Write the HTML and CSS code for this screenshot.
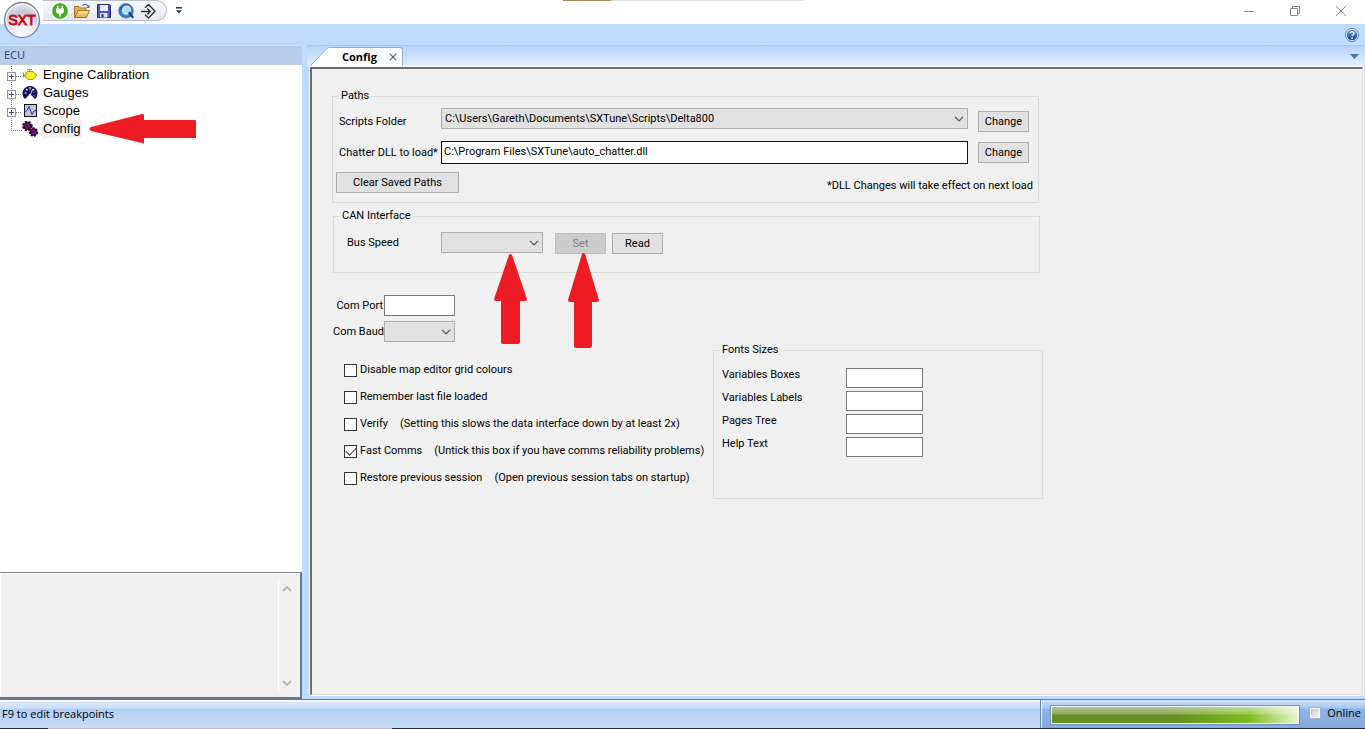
FILE: index.html
```html
<!DOCTYPE html>
<html lang="en">
<head>
<meta charset="utf-8">
<title>SXTune - Config</title>
<link rel="stylesheet" href="styles.css">
</head>
<body>
<svg class="defs" width="0" height="0" aria-hidden="true">
  <defs>
    <radialGradient id="orb" cx=".5" cy=".85" r=".9"><stop offset="0" stop-color="#fff"/><stop offset=".45" stop-color="#dfe3ea"/><stop offset=".65" stop-color="#c3c9d4"/><stop offset="1" stop-color="#f4f6f9"/></radialGradient>
    <linearGradient id="folder" x2="0" y2="1"><stop offset="0" stop-color="#fbe8a6"/><stop offset="1" stop-color="#e8a93a"/></linearGradient>
    <radialGradient id="globe"><stop offset="0" stop-color="#d9f1ff"/><stop offset=".5" stop-color="#5da4e0"/><stop offset="1" stop-color="#1d57ad"/></radialGradient>
    <linearGradient id="help" x2="0" y2="1"><stop offset="0" stop-color="#5f93e6"/><stop offset="1" stop-color="#123f9e"/></linearGradient>
    <symbol id="chevron" viewBox="0 0 10 6"><path d="M1 .8 5 4.8 9 .8" fill="none" stroke="#505050" stroke-width="1.2"/></symbol>
    <symbol id="branch" viewBox="0 0 22 18">
      <path d="M11.500 0V18M16 10.500H22" stroke="#808080" stroke-dasharray="1 1"/>
      <rect x="7.500" y="6.500" width="8" height="8" fill="#fff" stroke="#969696"/>
      <path d="M9 10.500H14M11.500 8V13" stroke="#33508f"/>
    </symbol>
  </defs>
</svg>

<header class="titlebar">
  <button class="orb" aria-label="Application menu">
    <svg viewBox="0 0 38 38" width="38" height="38"><circle cx="19" cy="19" r="17.500" fill="url(#orb)" stroke="#7f8794" stroke-width="1.300"/><circle cx="19" cy="19" r="16" fill="none" stroke="#fff" stroke-opacity=".8"/></svg>
    <span class="orb-text">SXT</span>
  </button>
  <nav class="quick" aria-label="Quick access">
    <button aria-label="Connect"><svg viewBox="0 0 16 16"><circle cx="8" cy="8" r="7.800" fill="#43ad1d"/><path d="M5.700 2.800V6M10.300 2.800V6" stroke="#fff" stroke-width="1.500"/><path d="M4 5.500H12V7.500A4 4 0 0 1 9 11.200V13.500H7V11.200A4 4 0 0 1 4 7.500Z" fill="#fff"/></svg></button>
    <button aria-label="Open"><svg viewBox="0 0 16 16"><path d="M.5 14.500V3.500H5L6.500 5H12V14.500Z" fill="#e6b04c" stroke="#a5741d"/><path d="M.8 14.500 4 7.500H15.600L12.300 14.500Z" fill="url(#folder)" stroke="#a5741d"/><path d="M8.500 3C9.800.8 12.500.8 13.800 2.800" fill="none" stroke="#4c6ea0" stroke-width="1.200"/><path d="M15.500 1.500V5H12Z" fill="#4c6ea0"/></svg></button>
    <button aria-label="Save"><svg viewBox="0 0 16 16"><path d="M1.500 1.500H13.500L14.500 2.500V14.500H1.500Z" fill="#4f55b5" stroke="#28286f"/><rect x="4" y="2" width="8" height="6" fill="#e8edfb"/><rect x="4" y="10" width="7.500" height="4.500" fill="#dfe3f2"/><rect x="5.500" y="11" width="2" height="3.500" fill="#28286f"/></svg></button>
    <button aria-label="Search online"><svg viewBox="0 0 16 16"><circle cx="8" cy="7.800" r="7.300" fill="url(#globe)" stroke="#678fc0"/><path d="M1.500 6C3 2 6 1 8.500 1.200 6 3 5 5 3 8Z" fill="#2761b5"/><circle cx="8.500" cy="7" r="4" fill="#b4dcf8" fill-opacity=".85" stroke="#eef7ff" stroke-width="1"/><path d="M11.500 10 14.500 14" stroke="#1b468e" stroke-width="2.400" stroke-linecap="round"/></svg></button>
    <button aria-label="Go online"><svg viewBox="0 0 16 16"><path d="M1 8.500H10M7.300 5.500 10.300 8.500 7.300 11.500M5.500 5V4.500L8.500 1.500 15 8.300 8.500 15 5.500 12.200V11.500" fill="none" stroke="#333" stroke-width="1.400"/></svg></button>
  </nav>
  <button class="more" aria-label="Customise toolbar"><svg viewBox="0 0 6 7" width="6" height="7"><path d="M0 .8H6" stroke="#1f3c6b" stroke-width="1.500"/><path d="M0 3.200H6L3 6.500Z" fill="#1f3c6b"/></svg></button>
  <div class="window-buttons">
    <button aria-label="Minimise"><svg viewBox="0 0 12 12"><path d="M1 6.500H11" stroke="#888"/></svg></button>
    <button aria-label="Restore"><svg viewBox="0 0 12 12"><path d="M1.500 3.500H8.500V10.500H1.500ZM3.500 3V1.500H10.500V8.500H9" fill="none" stroke="#888"/></svg></button>
    <button aria-label="Close"><svg viewBox="0 0 12 12"><path d="M1 1 11 11M11 1 1 11" stroke="#888"/></svg></button>
  </div>
</header>

<div class="ribbon">
  <button aria-label="Help"><svg viewBox="0 0 14 14" width="14" height="14"><circle cx="7" cy="7" r="6.500" fill="#fff" stroke="#5278b8"/><circle cx="7" cy="7" r="5.200" fill="url(#help)"/><path d="M5.100 5.500C5.100 3.200 9 3.200 9 5.400 9 6.900 7.100 6.700 7.100 8.300" fill="none" stroke="#fff" stroke-width="1.400"/><circle cx="7.100" cy="10.200" r=".9" fill="#fff"/></svg></button>
</div>

<div class="workspace">
  <aside class="sidebar">
    <h2 class="side-title">ECU</h2>
    <ul class="tree">
      <li>
        <svg class="branch"><use href="#branch"/></svg>
        <svg class="node-icon" viewBox="0 0 16 16"><path d="M2 8H4V5.500L6 4.500H11L13 7 15 8 13 10.500 11 12.500H6L4 10.500V9H2ZM7.500 4.500V2.500M5 2.500H10" fill="#f8f01c" stroke="#a39e00"/><path d="M1.500 5.500V10.500" stroke="#a39e00"/></svg>
        <span>Engine Calibration</span>
      </li>
      <li>
        <svg class="branch"><use href="#branch"/></svg>
        <svg class="node-icon" viewBox="0 0 16 16"><path d="M3 14A7.500 7.500 0 1 1 13 14L10 11H6Z" fill="#0c0c5e"/><path d="M2.500 8H4.500M4 4 5.500 5.500M8 2V4.500M12 4 10.500 5.500" stroke="#fff" stroke-width="1.200"/><path d="M11 7.500 14 7M11 10 13.500 11" stroke="#d4267c" stroke-width="1.200"/><path d="M8 10.500 10.500 4.500" stroke="#d8dcff"/><circle cx="8" cy="10.500" r="1.500" fill="#fff"/></svg>
        <span>Gauges</span>
      </li>
      <li>
        <svg class="branch"><use href="#branch"/></svg>
        <svg class="node-icon" viewBox="0 0 16 16"><rect x="2.500" y="1.500" width="12" height="12" fill="#c2c4cc" stroke="#111"/><path d="M3.500 8.500 5 7.500 7 3.500 10 11.500 12 8 14 7.500" fill="none" stroke="#2828d8"/></svg>
        <span>Scope</span>
      </li>
      <li>
        <svg class="branch" viewBox="0 0 22 18"><path d="M11.500 0V10.500H22" fill="none" stroke="#808080" stroke-dasharray="1 1"/></svg>
        <svg class="node-icon" viewBox="0 0 16 16"><g fill="#8a168a" stroke="#210021"><circle cx="5.300" cy="5" r="4.300" stroke-width="2" stroke-dasharray="2 1.500"/><circle cx="5.300" cy="5" r="3.300"/><circle cx="11.500" cy="11" r="3.700" stroke-width="2" stroke-dasharray="2 1.200"/><circle cx="11.500" cy="11" r="3"/></g><circle cx="5.300" cy="5" r="1.200" fill="#210021"/><circle cx="11.500" cy="11" r="1" fill="#210021"/></svg>
        <span class="selected">Config</span>
        <svg class="arrow arrow-left" viewBox="0 0 107 32"><path d="M2 14 53 1Q55 1 55 2V7H106Q107 7 107 8V25H55V30Q55 31 53 30L2 18Q-1 16 2 14Z"/></svg>
      </li>
    </ul>
    <div class="hint-box">
      <div class="scroll">
        <svg viewBox="0 0 10 6"><path d="M1 5 5 1 9 5" fill="none" stroke="#b5b5b5" stroke-width="1.800"/></svg>
        <svg viewBox="0 0 10 6"><path d="M1 1 5 5 9 1" fill="none" stroke="#b5b5b5" stroke-width="1.800"/></svg>
      </div>
    </div>
  </aside>

  <main class="document">
    <div class="tabs">
      <svg class="tab-slope" viewBox="0 0 20 19"><path d="M0 19 17 1.500Q18.500.5 20 .5V19Z" fill="#fff"/><path d="M0 19 17 1.500Q18.500.5 20 .5" fill="none" stroke="#8eafdc"/></svg>
      <div class="tab"><span>Config</span><button aria-label="Close tab"><svg viewBox="0 0 8 8" width="8" height="8"><path d="M.7.7 7.300 7.300M7.300.7.7 7.300" stroke="#4a648e" stroke-width="1.200"/></svg></button></div>
      <button class="tab-list" aria-label="Tab list"><svg viewBox="0 0 9 5" width="9" height="5"><path d="M0 0H9L4.500 5Z" fill="#4b73ab"/></svg></button>
    </div>
    <form class="panel">
      <fieldset class="group paths">
        <legend>Paths</legend>
        <div class="path-row first">
          <label for="scripts">Scripts Folder</label>
          <span class="drop"><select id="scripts"><option>C:\Users\Gareth\Documents\SXTune\Scripts\Delta800</option></select><svg><use href="#chevron"/></svg></span>
          <button type="button">Change</button>
        </div>
        <div class="path-row">
          <label for="dll">Chatter DLL to load*</label>
          <input class="dll" id="dll" type="text" value="C:\Program Files\SXTune\auto_chatter.dll">
          <button type="button">Change</button>
        </div>
        <div class="clear-row">
          <button type="button">Clear Saved Paths</button>
          <span>*DLL Changes will take effect on next load</span>
        </div>
      </fieldset>

      <fieldset class="group can">
        <legend>CAN Interface</legend>
        <div class="bus-row">
          <label for="bus">Bus Speed</label>
          <span class="drop"><select id="bus"></select><svg><use href="#chevron"/></svg>
            <svg class="arrow arrow-bus" viewBox="0 0 33 90"><path d="M15 1Q16.500-1 18 1L33 45Q33 47 31 47H26V88Q26 90 24 90H9Q7 90 7 88V47H2Q0 47 0 45Z"/></svg></span>
          <span class="set"><button type="button" disabled>Set</button>
            <svg class="arrow arrow-set" viewBox="0 0 31 95"><path d="M14 1Q15.500-1 17 1L31 47Q31 49 29 49H24V93Q24 95 22 95H8Q6 95 6 93V49H2Q0 49 0 47Z"/></svg></span>
          <button type="button">Read</button>
        </div>
      </fieldset>

      <div class="com">
        <label for="port">Com Port</label><input id="port" type="text">
        <label for="baud">Com Baud</label><span class="drop"><select id="baud"></select><svg><use href="#chevron"/></svg></span>
      </div>

      <div class="lower">
        <div class="checks">
          <div><label><input type="checkbox">Disable map editor grid colours</label></div>
          <div><label><input type="checkbox">Remember last file loaded</label></div>
          <div><label><input type="checkbox">Verify</label><span>(Setting this slows the data interface down by at least 2x)</span></div>
          <div><label><input type="checkbox" checked>Fast Comms</label><span>(Untick this box if you have comms reliability problems)</span></div>
          <div><label><input type="checkbox">Restore previous session</label><span>(Open previous session tabs on startup)</span></div>
        </div>
        <fieldset class="group fonts">
          <legend>Fonts Sizes</legend>
          <div class="font-grid">
            <label for="f1">Variables Boxes</label><input id="f1" type="text">
            <label for="f2">Variables Labels</label><input id="f2" type="text">
            <label for="f3">Pages Tree</label><input id="f3" type="text">
            <label for="f4">Help Text</label><input id="f4" type="text">
          </div>
        </fieldset>
      </div>
    </form>
  </main>
</div>

<footer class="status">
  <span class="message">F9 to edit breakpoints</span>
  <div class="status-right">
    <div class="meter" role="progressbar" aria-label="Activity"></div>
    <label><input type="checkbox">Online</label>
  </div>
</footer>
</body>
</html>
```
FILE: styles.css
```css
* { box-sizing: border-box; }
body {
  margin: 0;
  height: 100vh;
  display: flex;
  flex-direction: column;
  overflow: hidden;
  background: #bfdbff;
  color: #000;
  font: 11px/14px Roboto, "Liberation Sans", Arial, sans-serif;
}
.defs { position: absolute; }
button, input, select { font: inherit; color: inherit; margin: 0; }
button { padding: 0; border: 0; background: none; }
svg { display: block; }

/* title bar */
.titlebar {
  display: flex;
  align-items: flex-start;
  height: 24px;
  padding-left: 3px;
  background: linear-gradient(90deg, transparent 563px, #a98a5c 563px, #a98a5c 611px, #dedede 611px, #dedede 804px, transparent 804px) 0 0 / 100% 1px no-repeat #fff;
}
.orb { position: relative; z-index: 2; width: 38px; height: 38px; margin-top: 1px; }
.orb-text {
  position: absolute;
  inset: 0;
  line-height: 39px;
  text-align: center;
  font-family: "Liberation Sans", Arial, sans-serif;
  font-size: 14px;
  color: #c8101c;
  -webkit-text-stroke: 1px #c8101c;
}
.quick {
  display: flex;
  align-items: center;
  gap: 6px;
  height: 21px;
  margin-left: 2px;
  padding: 0 10px 0 9px;
  border: 1px solid #b9bfca;
  border-left: 0;
  border-radius: 0 11px 11px 0;
  background: linear-gradient(#f7f8fa, #e6e9ef);
}
.quick svg { width: 16px; height: 16px; }
.more { margin: 7px 0 0 9px; }
.window-buttons { display: flex; gap: 34px; margin-left: auto; padding: 5px 18px 0 0; }
.window-buttons svg { width: 12px; height: 12px; }
.ribbon { display: flex; justify-content: flex-end; align-items: center; height: 21px; padding-right: 6px; }

/* layout */
.workspace {
  flex: 1;
  min-height: 0;
  display: grid;
  grid-template-columns: 302px minmax(0, 1fr);
  gap: 5px;
}
.sidebar { display: flex; flex-direction: column; min-height: 0; background: #fff; }
.side-title {
  margin: 0;
  height: 20px;
  padding-left: 4px;
  border-top: 1px solid #cfe2fb;
  background: #b7cdea;
  color: #1d4486;
  font: 11px/18px "Open Sans", "Noto Sans", sans-serif;
}
.tree {
  flex: 1;
  margin: 0;
  padding: 1px 0 0;
  list-style: none;
  font: 13px/18px "Liberation Sans", Arial, sans-serif;
}
.tree li { position: relative; display: flex; align-items: center; height: 18px; }
.branch { width: 22px; height: 18px; }
.node-icon { width: 16px; height: 16px; margin-right: 4px; }
.tree span { padding: 0 1px; }
.tree .selected { background: #efefef; }
.arrow { position: absolute; fill: #ed1c24; z-index: 3; }
.arrow-left { left: 89px; top: -7px; width: 107px; height: 32px; }
.hint-box {
  display: flex;
  justify-content: flex-end;
  height: 127px;
  padding: 6px 8px 5px;
  border: 1px solid #8a8f96;
  border-width: 1px 2px 2px 0;
  border-color: #8a8f96 #66788f #66788f;
  background: #f0f0f0;
  box-shadow: inset 1px 1px #fff;
}
.scroll {
  display: flex;
  flex-direction: column;
  justify-content: space-between;
  padding: 7px 0 6px 3px;
  border-left: 1px solid #fff;
}
.scroll svg { width: 10px; height: 6px; }

/* document tabs */
.document { display: flex; flex-direction: column; min-height: 0; padding-bottom: 1px; }
.tabs {
  display: flex;
  align-items: flex-end;
  height: 21px;
  padding-left: 3px;
  border-top: 1px solid #a9c8f0;
  background: linear-gradient(#b5d3fb, #e3efff);
}
.tab-slope { width: 20px; height: 19px; }
.tab {
  display: flex;
  align-items: center;
  gap: 12px;
  height: 19px;
  padding: 0 5px 0 12px;
  border: 1px solid #8eafdc;
  border-width: 1px 1px 0 0;
  border-radius: 0 3px 0 0;
  background: #fff;
  font: bold 11px/16px "Open Sans", "Noto Sans", sans-serif;
}
.tab-list { margin: 0 6px 7px auto; }
.panel {
  flex: 1;
  min-height: 0;
  margin: 1px 2px 3px 3px;
  padding: 20px;
  border: 2px solid #6d6d6d;
  border-right: 1px solid #dcdcdc;
  border-bottom: 1px solid #dcdcdc;
  background: #f0f0f0;
  outline: 1px solid #fff;
}

/* form */
.group { min-width: 0; margin: 0; border: 1px solid #dcdcdc; }
.group legend { margin-left: 3px; padding: 0 2px; }
.panel button {
  width: 51px;
  height: 21px;
  border: 1px solid #adadad;
  background: #e1e1e1;
}
.panel button:disabled { background: #ccc; border-color: #bfbfbf; color: #838383; }
.panel input[type=text] {
  width: 100%;
  height: 21px;
  padding: 0 3px;
  border: 1px solid #7a7a7a;
  border-radius: 0;
  background: #fff;
}
.drop { position: relative; display: block; }
.drop select {
  display: block;
  appearance: none;
  width: 100%;
  height: 21px;
  padding: 0 18px 0 3px;
  border: 1px solid #adadad;
  border-radius: 0;
  background: #e1e1e1;
}
.drop svg:not(.arrow) { position: absolute; right: 4px; top: 8px; width: 10px; height: 6px; pointer-events: none; }
.paths { max-width: 707px; padding: 5px 5px 9px 3px; }
.path-row {
  display: grid;
  grid-template-columns: 105px minmax(0, 1fr) 61px;
  align-items: center;
  margin-bottom: 8px;
  padding-right: 4px;
}
.path-row label { padding-left: 3px; }
.path-row button { margin-left: 10px; }
.path-row.first { height: 24px; align-items: end; margin-bottom: 9px; }
.first .drop { align-self: start; }
.first label { padding-bottom: 3px; }
.panel input.dll[type=text] { height: 23px; padding: 0 2px 2px; border-color: #111; }
.clear-row { display: flex; justify-content: space-between; align-items: flex-end; }
.clear-row button { width: 123px; }
.can { max-width: 707px; margin: 6px 0 0 1px; padding: 9px 13px 18px; }
.group.can legend { margin-left: -7px; }
.bus-row { display: flex; align-items: flex-end; height: 22px; }
.bus-row label { width: 94px; align-self: center; }
.bus-row .drop { width: 102px; margin-right: 12px; align-self: flex-start; }
.set { position: relative; display: block; margin-right: 6px; }
.set button { display: block; }
.arrow-bus { left: 53px; top: 22px; width: 33px; height: 90px; }
.arrow-set { left: 13px; top: 20px; width: 31px; height: 95px; }
.com {
  display: grid;
  grid-template-columns: 51px 71px;
  row-gap: 5px;
  align-items: center;
  margin: 22px 0 0 1px;
}
.com label { padding-right: 1px; text-align: right; white-space: nowrap; }
.lower { display: flex; align-items: flex-start; max-width: 711px; margin-top: 1px; }
.checks { flex: 1; display: flex; flex-direction: column; gap: 13px; padding: 20px 0 0 12px; white-space: nowrap; }
.checks div { display: flex; gap: 12px; height: 14px; }
.checks label { display: flex; align-items: center; gap: 3px; }
.checks input {
  appearance: none;
  width: 13px;
  height: 13px;
  border: 1px solid #333;
  background: #fff;
}
.checks input:checked::after {
  content: "";
  display: block;
  width: 9px;
  height: 5px;
  margin: 2px 1px;
  border: solid #333;
  border-width: 0 0 1px 1px;
  transform: translateY(-1px) rotate(-45deg);
}
.fonts { width: 330px; padding: 11px 8px 41px; }
.group.fonts legend { margin-left: -2px; }
.font-grid { display: grid; grid-template-columns: 124px 77px; row-gap: 3px; }
.panel .font-grid input { height: 20px; }

/* status bar */
.status {
  display: flex;
  height: 30px;
  border-top: 1px solid #567db1;
  background:
    linear-gradient(90deg, #1c2b40 48px, #b4bcc8 48px, #b4bcc8 392px, #1c2b40 392px) 0 100% / 100% 1px no-repeat,
    linear-gradient(#fff 1px, #d9e8fb 2px, #cbdff8 8px, #b1cef4 9px, #c9ddf8);
  font: 11px/28px "Open Sans", "Noto Sans", sans-serif;
}
.message { flex: 1; padding-left: 2px; }
.status-right {
  display: flex;
  align-items: center;
  gap: 10px;
  width: 325px;
  margin-bottom: 1px;
  padding: 2px 4px 0 10px;
  border-left: 1px solid #5f86bd;
  box-shadow: inset 1px 0 #fff;
  background: linear-gradient(#cfe0fb, #a9c6f1 8px, #8fb3e8 9px, #86a9dd);
}
.meter {
  flex: 1;
  height: 18px;
  border: 1px solid #fff;
  outline: 1px solid #6f91be;
  background:
    linear-gradient(rgba(255,255,255,.5), rgba(255,255,255,.25) 7px, transparent 8px),
    linear-gradient(90deg, #648f22 0, #648f22 50%, #7cbc1d 80%, #e8f5cf);
}
.status-right label { display: flex; align-items: center; gap: 6px; margin-top: -5px; }
.status-right input {
  appearance: none;
  width: 12px;
  height: 12px;
  margin: 0;
  border: 2px solid #f5f5f5;
  outline: 1px solid #9db2d2;
  outline-offset: -1px;
  background: linear-gradient(135deg, #c2c5cc, #f6f6f6);
}
```
